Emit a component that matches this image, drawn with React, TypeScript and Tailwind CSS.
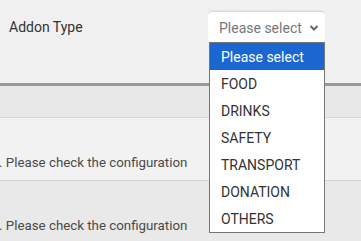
import React from 'react';

const options = ['Please select', 'FOOD', 'DRINKS', 'SAFETY', 'TRANSPORT', 'DONATION', 'OTHERS'];

const App: React.FC = () => {
  return (
    <div className="relative w-[361px] h-[241px] overflow-hidden bg-[#f0f0f0] font-['Roboto',sans-serif] text-[14px]">
      <div className="h-[83px] bg-[#f0f0f0] flex items-start pl-[9px] pt-[17px]">
        <span className="text-[#333] leading-[20px]">Addon Type</span>
      </div>
      <div className="h-[3px] bg-[#999]" />
      <div className="h-[32px] bg-[#e8e8e8] border-b border-[#d6d6d6]" />
      <div className="h-[63px] bg-[#f2f2f2] border-b border-[#d2d2d2] pt-[34px]">
        <span className="text-[#4a4a4a] text-[13.3px] leading-[20px] ml-[-1px]">. Please check the configuration</span>
      </div>
      <div className="h-[60px] bg-[#e9e9e9] pt-[34px]">
        <span className="text-[#4a4a4a] text-[13.3px] leading-[20px] ml-[-1px]">. Please check the configuration</span>
      </div>

      <div className="absolute left-[208px] top-[11px] w-[117px] h-[32px] bg-white rounded-[4px] border-t border-[#d8d8d8] shadow-[0_-1px_1px_rgba(0,0,0,0.04)] flex items-center pl-[11px] pr-[6px]">
        <span className="text-[#777] leading-[20px]">Please select</span>
        <svg className="ml-auto" width="10" height="8" viewBox="0 0 10 8">
          <path d="M1.5 2 L5 5.5 L8.5 2" fill="none" stroke="#666" strokeWidth="2" />
        </svg>
      </div>

      <div className="absolute left-[209px] top-[42px] w-[116px] h-[191px] bg-white border border-[#767676]">
        {options.map((o, i) => (
          <div
            key={o}
            className={`h-[27px] flex items-center pl-[11px] leading-[20px] ${i === 0 ? 'bg-[#1a67d2] text-white' : 'text-[#333]'}`}
          >
            {o}
          </div>
        ))}
      </div>
    </div>
  );
};

export default App;
